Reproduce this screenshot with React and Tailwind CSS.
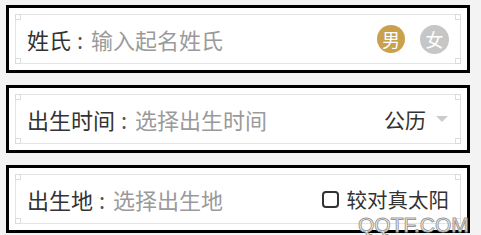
import React from "react";

function Corner({ pos }) {
  return (
    <span
      className={`absolute w-[6px] h-[6px] border border-[#dcdcdc] bg-white ${pos}`}
    />
  );
}

function Row({ children }) {
  return (
    <div className="h-[68px] border-[3px] border-black bg-white p-[6px] shrink-0">
      <div className="relative h-full border border-[#e4e4e4] flex items-center pl-[11px] pr-[11px]">
        <Corner pos="-left-[1px] -top-[1px]" />
        <Corner pos="-right-[1px] -top-[1px]" />
        <Corner pos="-left-[1px] -bottom-[1px]" />
        <Corner pos="-right-[1px] -bottom-[1px]" />
        {children}
      </div>
    </div>
  );
}

function Label({ text, placeholder }) {
  return (
    <div className="flex items-center text-[22px] leading-none">
      <span className="text-[#333333]">{text}</span>
      <span className="inline-block w-[20px] pl-[6px] text-left text-[#555555]">:</span>
      <span className="text-[#9a9a9a]">{placeholder}</span>
    </div>
  );
}

export default function App() {
  return (
    <div
      className="relative w-[481px] h-[235px] overflow-hidden bg-[#f3f3f3] pt-[5px] pl-[6px] pr-[11px] flex flex-col gap-[12px]"
      style={{ fontFamily: '"Noto Sans CJK SC", "Noto Sans", sans-serif' }}
    >
      <Row>
        <Label text="姓氏" placeholder="输入起名姓氏" />
        <div className="ml-auto flex items-center gap-[15px]">
          <span className="w-[28px] h-[28px] rounded-full bg-[#c9a14c] text-white text-[18px] leading-none flex items-center justify-center">
            男
          </span>
          <span className="w-[29px] h-[29px] rounded-full bg-[#c6c6c6] text-white text-[18px] leading-none flex items-center justify-center">
            女
          </span>
        </div>
      </Row>
      <Row>
        <Label text="出生时间" placeholder="选择出生时间" />
        <div className="ml-auto flex items-center pr-[1px]">
          <span className="text-[21px] leading-none text-[#333333]">公历</span>
          <svg width="12" height="6" viewBox="0 0 12 6" className="ml-[10px]">
            <path d="M0 0 L12 0 L6 6 Z" fill="#cccccc" />
          </svg>
        </div>
      </Row>
      <Row>
        <Label text="出生地" placeholder="选择出生地" />
        <div className="ml-auto flex items-center">
          <span className="block shrink-0 w-[17px] h-[17px] border-2 border-[#333333] rounded-[4px] bg-white" />
          <span className="ml-[8px] text-[20.5px] leading-none text-[#333333]">较对真太阳</span>
        </div>
      </Row>
      <span
        className="absolute left-[358px] top-[214px] text-[21px] leading-none text-white [-webkit-text-stroke:1px_#9a9a9a]"
        style={{ fontFamily: '"Liberation Sans", sans-serif' }}
      >
        QQTF.COM
      </span>
    </div>
  );
}
